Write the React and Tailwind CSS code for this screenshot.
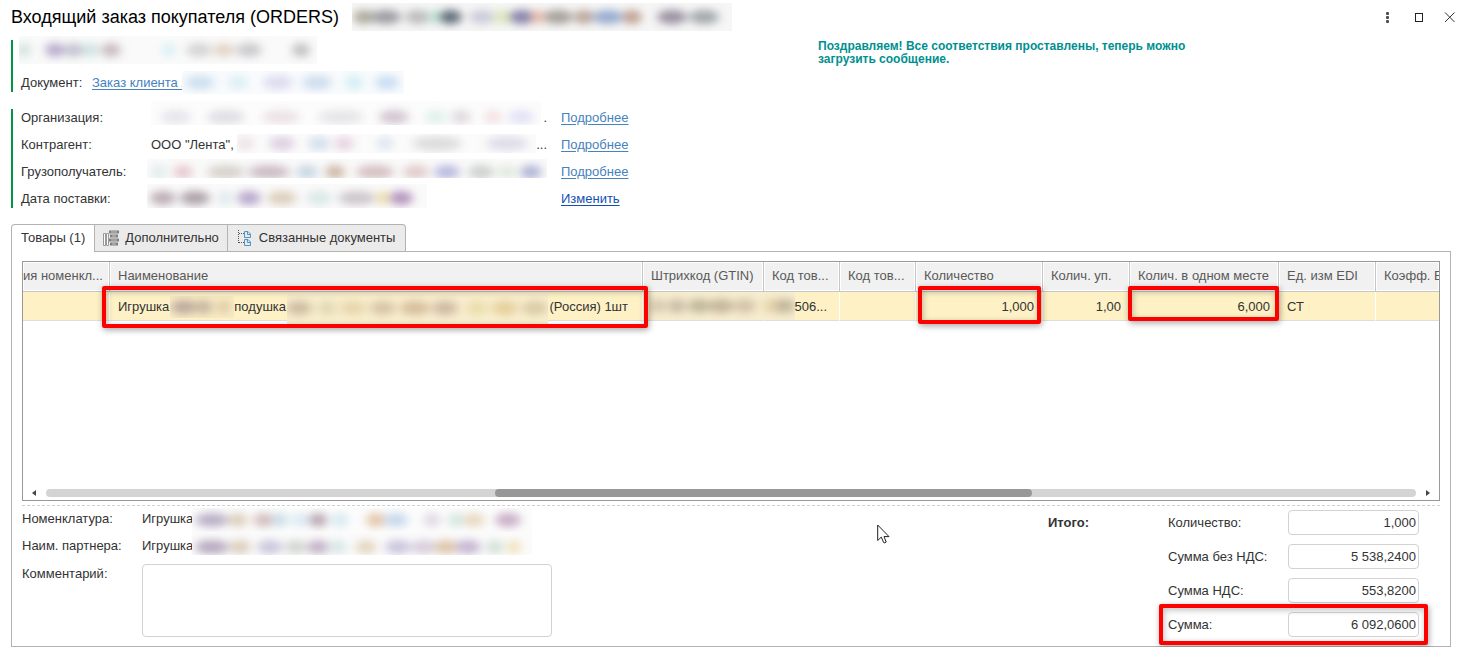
import { useId } from 'react';

// blobs: [centre x, radius, colour]
const Smudge = ({ width, height, blobs, bg = 'none', cy = height / 2, className }) => {
  const id = useId();
  return (
    <svg width={width} height={height} className={`pointer-events-none absolute ${className}`} aria-hidden="true">
      <filter id={id} x="-20%" y="-100%" width="140%" height="300%">
        <feGaussianBlur stdDeviation="5 4" />
      </filter>
      <rect width={width} height={height} fill={bg} />
      <g filter={`url(#${id})`} opacity="0.9">
        {blobs.map(([x, r, color]) => (
          <ellipse key={x} cx={x} cy={cy} rx={r + 1} ry="7" fill={color} />
        ))}
      </g>
    </svg>
  );
};

const Highlight = ({ className }) => (
  <span className={`pointer-events-none absolute z-10 rounded-xs border-4 border-[#fe0000] shadow-[1px_2px_6px_rgba(0,0,0,0.35),inset_1px_2px_6px_rgba(0,0,0,0.25)] ${className}`} />
);

const linkClass = 'text-[#4682bd] underline underline-offset-2';

const details = [
  {
    label: 'Организация:',
    value: '',
    tail: '.',
    action: 'Подробнее',
    smudge: { width: 390, height: 24, cy: 16, className: '-top-2 left-0', bg: '#fcfcfc', blobs: [[25, 14, '#e3e3ea'], [75, 18, '#dcdce2'], [130, 18, '#eadfe3'], [190, 22, '#e4e2e5'], [243, 14, '#cfc0cc'], [285, 10, '#dcf0ea'], [310, 9, '#ddd5dc'], [342, 8, '#f3dfdf'], [370, 12, '#dfdff5']] },
  },
  {
    label: 'Контрагент:',
    value: 'ООО "Лента",',
    tail: '...',
    action: 'Подробнее',
    smudge: { width: 299, height: 19, className: '-top-0.5 left-[86px]', bg: '#fbfbfb', blobs: [[8, 8, '#ece0e5'], [45, 12, '#d9ccdf'], [82, 10, '#cfdcec'], [107, 9, '#e5cfe0'], [148, 8, '#dce5ee'], [200, 24, '#d8d8da'], [270, 20, '#dcd8e6']] },
  },
  {
    label: 'Грузополучатель:',
    value: '',
    tail: '',
    action: 'Подробнее',
    smudge: { width: 400, height: 19, cy: 13, className: '-top-1 -left-1', bg: '#fafafa', blobs: [[12, 7, '#dfe9ea'], [36, 9, '#e6c4ca'], [79, 18, '#d3cec6'], [122, 20, '#c7b6bf'], [160, 10, '#c2d3e0'], [188, 9, '#c9b19e'], [228, 18, '#d1b9bb'], [269, 12, '#e0c6c6'], [300, 12, '#b3b3dd'], [334, 12, '#c9ccc9'], [360, 9, '#e0e8dc'], [384, 10, '#a9add0']] },
  },
  {
    label: 'Дата поставки:',
    value: '',
    tail: '',
    action: 'Изменить',
    smudge: { width: 280, height: 24, cy: 14, className: '-top-1.5 -left-1', bg: '#fbfafa', blobs: [[16, 12, '#b5a5ae'], [48, 14, '#a3979f'], [78, 7, '#dbe8ec'], [102, 11, '#b09ec8'], [135, 14, '#d8cab6'], [172, 12, '#d5e7e4'], [210, 18, '#c6c1c6'], [236, 5, '#ead99e'], [254, 11, '#aa88b6']] },
  },
];

const totals = [
  { id: 'qty', label: 'Количество:', value: '1,000' },
  { id: 'net', label: 'Сумма без НДС:', value: '5 538,2400' },
  { id: 'vat', label: 'Сумма НДС:', value: '553,8200' },
  { id: 'sum', label: 'Сумма:', value: '6 092,0600', marked: true },
];

const columns = [
  { title: 'ия номенкл...', width: 'w-[87px]', pad: 'pl-0' },
  { title: 'Наименование', width: '' },
  { title: 'Штрихкод (GTIN)', width: 'w-[121px]' },
  { title: 'Код тов...', width: 'w-[76px]' },
  { title: 'Код тов...', width: 'w-[76px]' },
  { title: 'Количество', width: 'w-[127px]' },
  { title: 'Колич. уп.', width: 'w-[87px]' },
  { title: 'Колич. в одном месте', width: 'w-[149px]' },
  { title: 'Ед. изм EDI', width: 'w-[97px]' },
  { title: 'Коэфф. E', width: 'w-[63px]', pad: 'pr-0' },
];

const TitleBar = () => (
  <header className="flex h-[34px] items-center justify-between">
    <div className="relative">
      <h1 className="text-lg leading-6 text-black">Входящий заказ покупателя (ORDERS)</h1>
      <Smudge
        width={380}
        height={28}
        bg="#f6f6f6"
        className="-top-0.5 left-[341px]"
        blobs={[[12, 10, '#a5a292'], [34, 14, '#929298'], [66, 12, '#b5b5b8'], [84, 7, '#bfe3d6'], [98, 11, '#4f5b6a'], [130, 12, '#c6c6d6'], [150, 8, '#dce6b8'], [170, 13, '#7d76a0'], [186, 5, '#e9b7a0'], [206, 14, '#9c958f'], [232, 9, '#b39d8e'], [256, 14, '#8aa3c9'], [280, 9, '#b99886'], [320, 14, '#8f8494'], [352, 14, '#989ea0']]}
      />
    </div>
    <div className="flex items-center gap-5">
      <button type="button" aria-label="Ещё" className="size-[11px]">
        <svg viewBox="0 0 11 11" className="size-full" fill="#4d4d4d">
          <rect x="4" y="0" width="3" height="3" rx="1" />
          <rect x="4" y="4" width="3" height="3" rx="1" />
          <rect x="4" y="8" width="3" height="3" rx="1" />
        </svg>
      </button>
      <button type="button" aria-label="Развернуть" className="size-[11px]">
        <svg viewBox="0 0 11 11" className="size-full" fill="none" stroke="#222">
          <rect x="2.500" y="1.500" width="7" height="8" />
        </svg>
      </button>
      <button type="button" aria-label="Закрыть" className="size-[11px]">
        <svg viewBox="0 0 11 11" className="size-full" fill="none" stroke="#333">
          <path d="M1 .5l9.500 9.500M10.500.5L1 10" />
        </svg>
      </button>
    </div>
  </header>
);

const DocumentInfo = () => (
  <section className="grid grid-cols-[807px_1fr] pt-1.5">
    <div>
      <div className="relative flex h-[52px] items-end border-l-2 border-[#009646] pl-2">
        <Smudge
          width={298}
          height={28}
          bg="#fafafa"
          className="-top-1 left-1.5"
          blobs={[[5, 6, '#cde0da'], [36, 9, '#b3a2c8'], [55, 9, '#bcbccb'], [72, 7, '#c9dfe0'], [92, 9, '#c3b4b9'], [150, 6, '#d5f0f5'], [180, 12, '#d0d0d0'], [205, 10, '#e0d1c3'], [230, 12, '#c5c5c9'], [282, 8, '#bababa']]}
        />
        <span className="w-[71px]">Документ:</span>
        <a href="#order" className={linkClass}>Заказ клиента А</a>
        <Smudge
          width={222}
          height={23}
          bg="#f9fbfd"
          className="top-[31px] left-[169px]"
          blobs={[[18, 14, '#c8ddee'], [56, 9, '#d8eef4'], [96, 14, '#dad7ee'], [135, 14, '#c9d9ec'], [172, 8, '#cdecf3'], [205, 11, '#c2daf1']]}
        />
      </div>
      <div className="mt-[17px] flex flex-col gap-[9px] border-l-2 border-[#009646] pl-2">
        {details.map((row) => (
          <div key={row.label} className="grid h-[18px] grid-cols-[130px_396px_auto] items-center">
            <span>{row.label}</span>
            <div className="relative flex h-[18px] items-center justify-between">
              <span>{row.value}</span>
              <Smudge {...row.smudge} />
              <span>{row.tail}</span>
            </div>
            <a
              href="#details"
              className={row.action === 'Изменить' ? 'ml-3.5 text-[#1450b4] underline underline-offset-2' : `ml-3.5 ${linkClass}`}
            >
              {row.action}
            </a>
          </div>
        ))}
      </div>
    </div>
    <p className="max-w-[400px] text-xs leading-[13px] font-bold text-[#009090]">
      Поздравляем! Все соответствия проставлены, теперь можно загрузить сообщение.
    </p>
  </section>
);

const Tabs = () => (
  <div role="tablist" className="mt-4 flex h-[27px]">
    <button type="button" role="tab" aria-selected="true" className="relative -mb-px rounded-tl-sm border border-b-0 border-[#b3b3b3] bg-white px-[9px] pb-0.5">
      Товары (1)
    </button>
    <button type="button" role="tab" aria-selected="false" className="flex items-center gap-1.5 border-t border-r border-[#b3b3b3] bg-[#ebebeb] px-2">
      <svg width="16" height="16" viewBox="0 0 16 16" aria-hidden="true">
        <path d="M.5 3.500h2v12h-2zM3.500 3.500h2v12h-2z" fill="#fff" stroke="#999" />
        <path d="M6 .5h10v3H6zM7 4.500h8v3H7zM6 8.500h10v3H6zM7 12.500h8v3H7z" fill="#808080" />
        <path d="M8 2h6M9 6h4M8 10h6M9 14h4" stroke="#c4c4c4" />
      </svg>
      Дополнительно
    </button>
    <button type="button" role="tab" aria-selected="false" className="flex items-center gap-2 rounded-tr-sm border-t border-r border-[#b3b3b3] bg-[#ebebeb] px-[10px]">
      <svg width="13" height="16" viewBox="0 0 13 16" fill="none" aria-hidden="true">
        <path d="M.5 0v13M1 3.500h5M1 12.500h5" stroke="#555" strokeDasharray="1 1" />
        <path d="M6.500 1.500h3.500l2.500 2.500v3.500h-6zM6.500 9.500h3.500l2.500 2.500v3.500h-6z" fill="#dcebf5" stroke="#5b93bb" />
        <path d="M9.500 1.500v3h3M9.500 9.500v3h3" stroke="#5b93bb" />
      </svg>
      Связанные документы
    </button>
  </div>
);

const cell = 'relative h-[29px] border-r border-b border-r-white border-b-[#dedede] px-2 pt-0.5 whitespace-nowrap';

const GoodsTable = () => (
  <div className="flex h-60 flex-col border border-[#999]">
    <table className="w-full table-fixed border-separate border-spacing-0">
      <thead>
        <tr>
          {columns.map((col, i) => (
            <th
              key={i}
              className={`h-[30px] overflow-hidden border-r border-b border-[#c6c6c6] bg-[#f1f1f1] px-2 pb-0.5 text-left font-normal whitespace-nowrap text-[#595959] shadow-[inset_0_0_0_1px_#fff] last:border-r-0 ${col.width} ${col.pad || ''}`}
            >
              {col.title}
            </th>
          ))}
        </tr>
      </thead>
      <tbody>
        <tr className="bg-[#fdf1c5]">
          <td className={cell} />
          <td className={cell}>
            <div className="flex justify-between pr-1.5">
              <span>
                Игрушка
                <span className="ml-[65px]">подушка</span>
              </span>
              <span>(Россия) 1шт</span>
            </div>
            <Smudge width={64} height={22} bg="#f8ecc6" className="top-1 left-[60px]" blobs={[[14, 12, '#b5a298'], [34, 8, '#c2b09c'], [54, 6, '#dcc8a0']]} />
            <Smudge
              width={261}
              height={30}
              bg="#f8eece"
              cy={14}
              className="top-0.5 left-[177px]"
              blobs={[[12, 12, '#cab69c'], [40, 8, '#dcd5b0'], [66, 12, '#e6d3a6'], [96, 12, '#d3c0a2'], [128, 14, '#d1b896'], [158, 12, '#cab29c'], [190, 10, '#e8dba8'], [218, 12, '#e4cb94'], [248, 12, '#d5c7a0']]}
            />
            <Highlight className="-top-1.5 -right-1.5 -bottom-2 -left-2" />
          </td>
          <td className={cell}>
            <Smudge
              width={146}
              height={28}
              bg="#f7edcf"
              className="top-0 left-1.5 z-1"
              blobs={[[8, 9, '#d3c5ad'], [28, 8, '#c3b5a4'], [50, 10, '#b8b094'], [72, 12, '#beae92'], [96, 10, '#cfbda2'], [124, 9, '#e2cda4'], [136, 9, '#b9ad94']]}
            />
          </td>
          <td className={`${cell} text-right`}>
            <span className="pr-1">506...</span>
          </td>
          <td className={cell} />
          <td className={`${cell} text-right`}>
            1,000
            <Highlight className="-top-1.5 right-px -bottom-1 left-0.5" />
          </td>
          <td className={`${cell} text-right`}>1,00</td>
          <td className={`${cell} text-right`}>
            6,000
            <Highlight className="-top-1.5 -right-px -bottom-px -left-0.5" />
          </td>
          <td className={cell}>СТ</td>
          <td className={`${cell} border-r-0`} />
        </tr>
      </tbody>
    </table>
    <div className="flex-1" />
    <div className="flex h-3.5 items-center gap-[9px] px-2">
      <button type="button" aria-label="Влево" className="flex h-3.5 w-1.5 items-center">
        <svg width="6" height="6" viewBox="0 0 6 6" fill="#444" aria-hidden="true"><path d="M5 0v6L1 3z" /></svg>
      </button>
      <div className="flex h-2 flex-1 rounded-full bg-[#d4d4d4]">
        <div className="ml-[32.8%] w-[39.2%] rounded-full bg-[#989898]" />
      </div>
      <button type="button" aria-label="Вправо" className="flex h-3.5 w-1.5 items-center">
        <svg width="6" height="6" viewBox="0 0 6 6" fill="#444" aria-hidden="true"><path d="M1 0v6l4-3z" /></svg>
      </button>
    </div>
  </div>
);

const Summary = () => (
  <div className="mt-1 flex justify-between border-t border-dashed border-[#d0d0d0] pt-1 pr-[21px]">
    <div className="relative flex flex-col gap-[9px]">
      <div className="flex h-[18px] items-center">
        <span className="w-[120px]">Номенклатура:</span>
        <span>Игрушка</span>
      </div>
      <div className="flex h-[18px] items-center">
        <span className="w-[120px]">Наим. партнера:</span>
        <span>Игрушка</span>
      </div>
      <div className="flex">
        <label htmlFor="comment" className="w-[120px] leading-5">Комментарий:</label>
        <textarea id="comment" className="h-[73px] w-[410px] resize-none rounded-sm border border-[#d2d2d2] bg-white outline-none" />
      </div>
      <Smudge
        width={340}
        height={24}
        bg="#fcfcfc"
        className="-top-0.5 left-[170px]"
        blobs={[[20, 16, '#b3a6c0'], [46, 9, '#d8cab6'], [72, 10, '#cfb7b7'], [88, 7, '#c3dce5'], [108, 8, '#d8e8f1'], [126, 9, '#b5a0ae'], [148, 8, '#d3e8f1'], [184, 9, '#e1c19e'], [204, 11, '#c0d4eb'], [240, 8, '#ddd4e4'], [264, 7, '#cde4dc'], [282, 10, '#e6d5ba'], [316, 12, '#c2a6c0']]}
      />
      <Smudge
        width={340}
        height={23}
        cy={15}
        bg="#fbfbfb"
        className="top-[22px] left-[170px]"
        blobs={[[20, 16, '#afa1ba'], [48, 10, '#d8c9b6'], [78, 12, '#c5c1d8'], [104, 10, '#cdd2cd'], [126, 10, '#bda9c1'], [146, 8, '#d4e4e3'], [174, 10, '#e1d2ba'], [206, 12, '#c4bfda'], [232, 12, '#d3c8da'], [254, 11, '#dac09f'], [276, 12, '#bfaecd'], [303, 8, '#cfded3'], [322, 6, '#f1dfb4']]}
      />
    </div>
    <div className="flex">
      <strong className="w-[120px] leading-[25px]">Итого:</strong>
      <div className="flex flex-col gap-[9px]">
        {totals.map((row) => (
          <div key={row.id} className="relative flex h-[25px] items-center">
            <label htmlFor={row.id} className="w-[120px]">{row.label}</label>
            <input
              id={row.id}
              type="text"
              readOnly
              defaultValue={row.value}
              className="h-[25px] w-[131px] rounded-sm border border-[#d2d2d2] bg-white px-0.5 text-right outline-none"
            />
            {row.marked && <Highlight className="-inset-x-[9px] -inset-y-2" />}
          </div>
        ))}
      </div>
    </div>
  </div>
);

export default function App() {
  return (
    <main className="relative bg-white px-[11px] font-['Liberation_Sans',Arial,sans-serif] text-[13px] leading-[18px] text-[#333]">
      <TitleBar />
      <DocumentInfo />
      <div className="pr-1">
        <Tabs />
        <section className="border border-[#b3b3b3] px-[10px] pt-[9px] pb-[9px]">
          <GoodsTable />
          <Summary />
        </section>
      </div>
      <svg width="13" height="20" viewBox="0 0 13 20" className="pointer-events-none absolute top-[524px] left-[877px]" aria-hidden="true">
        <path d="M.7 1v15.500l3.600-3.400 2.400 5.500q1 .8 2.500-.6L7 12.600h5z" fill="#fff" stroke="#222" />
      </svg>
    </main>
  );
}
